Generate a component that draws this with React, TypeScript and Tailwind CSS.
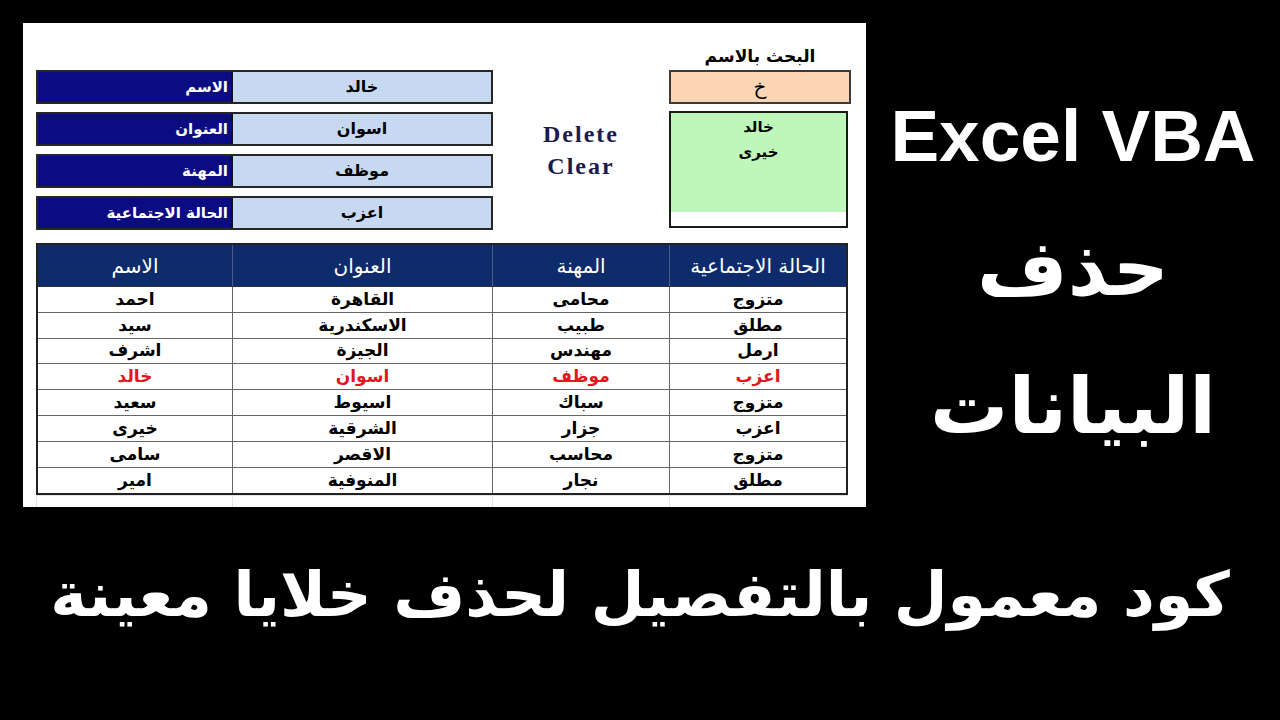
const formRows = [
  { label: 'الاسم', value: 'خالد' },
  { label: 'العنوان', value: 'اسوان' },
  { label: 'المهنة', value: 'موظف' },
  { label: 'الحالة الاجتماعية', value: 'اعزب' },
];

const headers = ['الاسم', 'العنوان', 'المهنة', 'الحالة الاجتماعية'];

const rows = [
  ['احمد', 'القاهرة', 'محامى', 'متزوج'],
  ['سيد', 'الاسكندرية', 'طبيب', 'مطلق'],
  ['اشرف', 'الجيزة', 'مهندس', 'ارمل'],
  ['خالد', 'اسوان', 'موظف', 'اعزب'],
  ['سعيد', 'اسيوط', 'سباك', 'متزوج'],
  ['خيرى', 'الشرقية', 'جزار', 'اعزب'],
  ['سامى', 'الاقصر', 'محاسب', 'متزوج'],
  ['امير', 'المنوفية', 'نجار', 'مطلق'],
];

const SELECTED = 3;

function FormRow({ label, value }: { label: string; value: string }) {
  return (
    <div className="flex h-[34px] border-2 border-[#262626]">
      <div className="w-[195px] bg-[#0b0b82] border-r-2 border-[#111] flex items-center justify-end pr-[3px] text-white font-bold text-[15px]">
        <span dir="rtl">{label}</span>
      </div>
      <div className="flex-1 bg-[#c6d9f1] flex items-center justify-center text-black font-bold text-[16px]">
        <span dir="rtl">{value}</span>
      </div>
    </div>
  );
}

function Sheet() {
  return (
    <div className="w-[843px] h-[484px] bg-white pl-[13px] pt-[20px] flex flex-col font-['DejaVu_Sans',sans-serif]">
      {/* top area: form, buttons, search */}
      <div className="flex">
        <div className="w-[457px] pt-[27px] flex flex-col gap-[8px]">
          {formRows.map((r) => (
            <FormRow key={r.label} label={r.label} value={r.value} />
          ))}
        </div>

        <div className="w-[176px] flex flex-col items-center pt-[75px] font-['Liberation_Serif',serif] font-bold text-[24px] leading-[32px] tracking-[2px] text-[#1b1b50]">
          <span>Delete</span>
          <span>Clear</span>
        </div>

        <div className="w-[182px] flex flex-col">
          <div className="h-[27px] flex items-center justify-center text-[17px] font-bold text-black" dir="rtl">
            البحث بالاسم
          </div>
          <div className="h-[34px] bg-[#fcd6b4] border-2 border-[#3a3a3a] flex items-center justify-center text-[20px] text-black">
            خ
          </div>
          <div className="mt-[7px] w-[179px] h-[117px] border-2 border-[#1a1a1a] flex flex-col bg-white">
            <div className="h-[99px] bg-[#bff6b9] flex flex-col items-center pt-[2px] text-[15px] font-bold leading-[25px] text-black" dir="rtl">
              <span>خالد</span>
              <span>خيرى</span>
            </div>
          </div>
        </div>
      </div>

      {/* data table */}
      <div className="mt-[13px] w-[812px] border-2 border-[#222]">
        <div className="grid grid-cols-[195px_260px_177px_176px] h-[42px] bg-[#0e2c6c] border-b border-[#333]">
          {headers.map((h, i) => (
            <div
              key={h}
              className={`flex items-center justify-center text-white text-[20px] ${i < 3 ? 'border-r border-[#4a5c86]' : ''}`}
              dir="rtl"
            >
              {h}
            </div>
          ))}
        </div>
        {rows.map((row, ri) => (
          <div
            key={ri}
            className={`grid grid-cols-[195px_260px_177px_176px] h-[25.8px] ${ri < rows.length - 1 ? 'border-b border-[#666]' : ''}`}
          >
            {row.map((cell, ci) => (
              <div
                key={ci}
                className={`flex items-center justify-center font-bold text-[17px] leading-none ${ci < 3 ? 'border-r border-[#666]' : ''} ${ri === SELECTED ? 'text-[#e4161b]' : 'text-black'}`}
                dir="rtl"
              >
                {cell}
              </div>
            ))}
          </div>
        ))}
      </div>

      {/* faint sheet gridlines below */}
      <div className="flex-1 grid grid-cols-[197px_260px_177px_178px] w-[812px] border-t border-[#e4e4e4]">
        <div className="border-r border-l border-[#e4e4e4]" />
        <div className="border-r border-[#e4e4e4]" />
        <div className="border-r border-[#e4e4e4]" />
        <div />
      </div>
    </div>
  );
}

export default function App() {
  return (
    <div className="w-[1280px] h-[720px] bg-black overflow-hidden flex flex-col">
      <div className="flex pt-[23px]">
        <div className="ml-[23px]">
          <Sheet />
        </div>
        <div className="flex-1 flex flex-col items-center text-white">
          <div className="mt-[72px] h-[80px] flex items-center font-['Liberation_Sans',sans-serif] font-bold text-[73px] leading-none">
            Excel VBA
          </div>
          <div className="mt-[38px] h-[110px] flex items-center font-['DejaVu_Sans',sans-serif] font-bold text-[78px] leading-none" dir="rtl">
            حذف
          </div>
          <div className="mt-[28px] h-[110px] flex items-center font-['DejaVu_Sans',sans-serif] font-bold text-[78px] leading-none" dir="rtl">
            البيانات
          </div>
        </div>
      </div>
      <div className="mt-[43px] h-[90px] flex items-center justify-center text-white font-['DejaVu_Sans',sans-serif] font-bold text-[62px] leading-none" dir="rtl">
        كود معمول بالتفصيل لحذف خلايا معينة
      </div>
    </div>
  );
}
